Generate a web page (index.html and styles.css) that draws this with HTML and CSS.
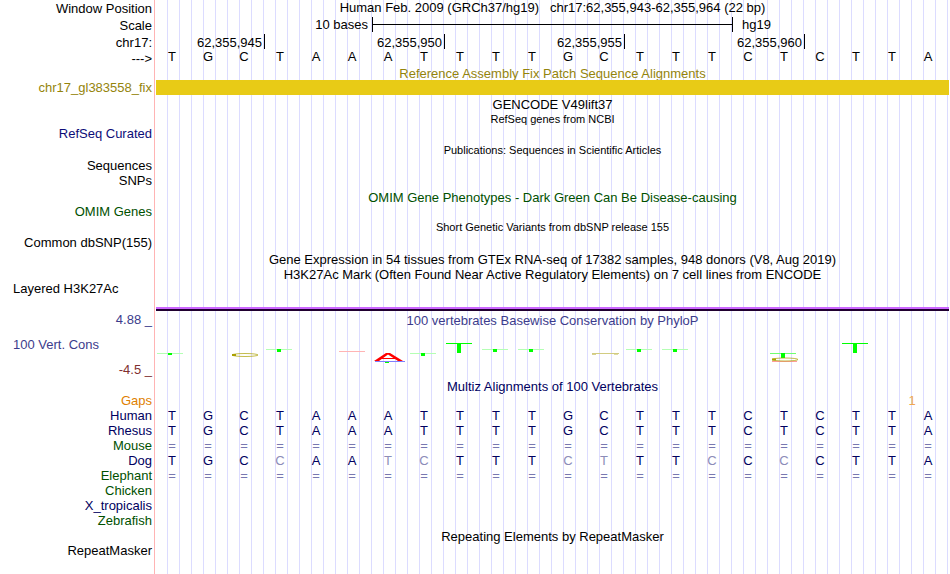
FILE: index.html
```html
<!DOCTYPE html>
<html lang="en">
<head>
    <meta charset="UTF-8">
    <meta name="viewport" content="width=device-width, initial-scale=1.0">
    <title>Human chr17:62,355,943-62,355,964</title>
    <link rel="stylesheet" href="styles.css">
</head>
<body>
    <div class="browser">
        <div class="row head h16"><div class="label">Window Position</div><div class="track title">Human Feb. 2009 (GRCh37/hg19) &nbsp; chr17:62,355,943-62,355,964 (22 bp)</div></div>
        <div class="row head h18">
            <div class="label">Scale</div>
            <div class="track scale">
                <span class="scale-text">10 bases</span>
                <span class="scale-bar"></span>
                <span class="assembly">hg19</span>
            </div>
        </div>
        <div class="row head h16">
            <div class="label">chr17:</div>
            <div class="track ruler">
                <span class="tick first">62,355,945</span>
                <span class="tick">62,355,950</span>
                <span class="tick">62,355,955</span>
                <span class="tick">62,355,960</span>
            </div>
        </div>
        <div class="row head h16"><div class="label">---&gt;</div><div class="track bases ref" data-seq="TGCTAAATTTTGCTTTCTCTTA"></div></div>
        <div class="row h14"><div class="label"></div><div class="track title gold">Reference Assembly Fix Patch Sequence Alignments</div></div>
        <div class="row h16"><div class="label gold">chr17_gl383558_fix</div><div class="track"><div class="patch"></div></div></div>

        <div class="row h16"><div class="label"></div><div class="track title">GENCODE V49lift37</div></div>
        <div class="row h14"><div class="label"></div><div class="track title small">RefSeq genes from NCBI</div></div>
        <div class="row h16"><div class="label blue">RefSeq Curated</div><div class="track"></div></div>
        <div class="row h16"><div class="label"></div><div class="track title small">Publications: Sequences in Scientific Articles</div></div>
        <div class="row"><div class="label">Sequences</div><div class="track"></div></div>
        <div class="row h16"><div class="label">SNPs</div><div class="track"></div></div>
        <div class="row h16"><div class="label"></div><div class="track title green">OMIM Gene Phenotypes - Dark Green Can Be Disease-causing</div></div>
        <div class="row h14"><div class="label green">OMIM Genes</div><div class="track"></div></div>
        <div class="row h16"><div class="label"></div><div class="track title small">Short Genetic Variants from dbSNP release 155</div></div>
        <div class="row h16"><div class="label">Common dbSNP(155)</div><div class="track"></div></div>
        <div class="row h16"><div class="label"></div><div class="track title">Gene Expression in 54 tissues from GTEx RNA-seq of 17382 samples, 948 donors (V8, Aug 2019)</div></div>
        <div class="row h14"><div class="label"></div><div class="track title">H3K27Ac Mark (Often Found Near Active Regulatory Elements) on 7 cell lines from ENCODE</div></div>
        <div class="row signal"><div class="label left">Layered H3K27Ac</div><div class="track"><div class="h3k27ac"></div></div></div>

        <div class="row phylop">
            <div class="label">
                <span class="violet">4.88 _</span>
                <span class="violet name">100 Vert. Cons</span>
                <span class="brown">-4.5 _</span>
            </div>
            <div class="track">
                <div class="title violet">100 vertebrates Basewise Conservation by PhyloP</div>
                <svg class="logo" width="792" height="36" viewBox="0 0 792 36" shape-rendering="crispEdges">
                    <defs>
                        <g id="t-low"><rect width="26" height="1" fill="#b4ffb4"/><rect x="11" width="4" height="3" fill="#00ff00"/></g>
                        <g id="t-high"><rect width="26" height="1" fill="#00ff00"/><rect x="11" width="4" height="10" fill="#00ff00"/></g>
                    </defs>
                    <rect x="1" y="24" width="26" height="1" fill="#b4ffb4"/>
                    <rect x="12" y="24" width="4" height="2" fill="#00ff00"/>
                    <g shape-rendering="auto" fill="none" stroke="#aaa000">
                        <ellipse cx="89" cy="26" rx="13" ry="1.5" stroke-opacity=".7"/>
                        <path d="M76 26h4" stroke-width="2"/>
                    </g>
                    <use href="#t-low" x="110" y="20"/>
                    <rect x="183" y="22" width="26" height="1" fill="#ffb4b4"/>
                    <rect x="219" y="32" width="30" height="1" fill="#8080ff"/>
                    <path d="M218 32L230 24H234L247 32H242L232 25.5L223 32ZM225 29H240V30H225Z" fill="#ff0000" shape-rendering="auto"/>
                    <rect x="229" y="33" width="4" height="1" fill="#00ff00"/>
                    <use href="#t-low" x="254" y="24"/>
                    <use href="#t-high" x="290" y="14"/>
                    <use href="#t-low" x="326" y="20"/>
                    <use href="#t-low" x="362" y="20"/>
                    <rect x="436" y="24" width="27" height="1" fill="#d2cc80"/>
                    <rect x="436" y="25" width="4" height="1" fill="#d8d290"/>
                    <rect x="458" y="25" width="4" height="1" fill="#e0dca8"/>
                    <use href="#t-low" x="470" y="20"/>
                    <use href="#t-low" x="506" y="20"/>
                    <rect x="614" y="24" width="26" height="1" fill="#70ff70"/>
                    <rect x="625" y="24" width="4" height="5" fill="#00ff00"/>
                    <rect x="616" y="32" width="25" height="1" fill="#ff9c9c"/>
                    <g shape-rendering="auto" fill="none" stroke="#aaa000">
                        <ellipse cx="629" cy="30.5" rx="13" ry="1.5" stroke-opacity=".7"/>
                        <path d="M616 30.5h4" stroke-width="2"/>
                    </g>
                    <use href="#t-high" x="686" y="14"/>
                </svg>
            </div>
        </div>

        <div class="row"><div class="label"></div><div class="track title navy">Multiz Alignments of 100 Vertebrates</div></div>
        <div class="row"><div class="label orange">Gaps</div><div class="track bases"><span class="gap">1</span></div></div>
        <div class="row"><div class="label navy">Human</div><div class="track bases navy" data-seq="TGCTAAATTTTGCTTTCTCTTA"></div></div>
        <div class="row"><div class="label navy">Rhesus</div><div class="track bases navy" data-seq="TGCTAAATTTTGCTTTCTCTTA"></div></div>
        <div class="row"><div class="label green">Mouse</div><div class="track bases navy" data-seq="======================"></div></div>
        <div class="row"><div class="label navy">Dog</div><div class="track bases navy" data-seq="TGCcAAtcTTTctTTcCcCTTA"></div></div>
        <div class="row"><div class="label green">Elephant</div><div class="track bases navy" data-seq="======================"></div></div>
        <div class="row"><div class="label green">Chicken</div><div class="track"></div></div>
        <div class="row"><div class="label navy">X_tropicalis</div><div class="track"></div></div>
        <div class="row"><div class="label green">Zebrafish</div><div class="track"></div></div>
        <div class="row"><div class="label"></div><div class="track title">Repeating Elements by RepeatMasker</div></div>
        <div class="row last"><div class="label">RepeatMasker</div><div class="track"></div></div>
    </div>

    <script>
        // one cell per base, lower case = differs from the reference
        document.querySelectorAll('[data-seq]').forEach(function (track) {
            for (const base of track.dataset.seq) {
                const cell = document.createElement('span');
                cell.textContent = base.toUpperCase();
                if (base === '=') {
                    cell.className = 'unaligned';
                } else if (base !== base.toUpperCase()) {
                    cell.className = 'mismatch';
                }
                track.appendChild(cell);
            }
        });
    </script>
</body>
</html>
```
FILE: styles.css
```css
:root {
    --base: 36px;
}

body {
    margin: 0;
    background-color: #fff;
    color: #000;
    font-family: "Liberation Sans", Arial, Helvetica, sans-serif;
    font-size: 13px;
    line-height: 15px;
}

.browser {
    display: flex;
    flex-direction: column;
    min-height: 100vh;
}

.row {
    display: flex;
    height: 15px;
}

.h14 {
    height: 14px;
    line-height: 14px;
}

.h16 {
    height: 16px;
    line-height: 16px;
}

.h18 {
    height: 18px;
    line-height: 18px;
}

.last {
    flex: 1;
}

.label {
    box-sizing: border-box;
    flex: none;
    width: 155px;
    padding-right: 2px;
    border-right: 1px solid #ffb4b4;
    text-align: right;
    white-space: nowrap;
}

.label.left {
    padding-left: 13px;
    text-align: left;
}

.head .label {
    line-height: 18px;
}

.head.h18 .label {
    line-height: 20px;
}

.track {
    flex: 1;
    min-width: 0;
    margin: 0 1px;
    background-image: repeating-linear-gradient(to right, transparent 0, transparent 11px, #dcdcff 11px, #dcdcff 12px);
}

.title {
    line-height: 18px;
    text-align: center;
    white-space: nowrap;
}

.h14 .title,
.head .title {
    line-height: 16px;
}

.small {
    font-size: 11px;
}

.h14 .small {
    line-height: 14px;
}

.h16 .small {
    line-height: 16px;
}

/* scale and ruler */
.scale,
.ruler,
.bases {
    display: grid;
    grid-template-columns: repeat(22, var(--base));
}

.scale-text {
    grid-column: span 6;
    padding-right: 4px;
    text-align: right;
}

.scale-bar {
    grid-column: span 10;
    height: 15px;
    margin: 1px -1px 0 0;
    border: solid #000;
    border-width: 0 1px;
    background: linear-gradient(#000, #000) 0 7px / 100% 1px no-repeat;
}

.assembly {
    grid-column: span 3;
    padding-left: 10px;
}

.tick {
    grid-column: span 5;
    height: 15px;
    margin-right: -1px;
    padding-right: 2px;
    border-right: 1px solid #000;
    line-height: 18px;
    text-align: right;
}

.tick.first {
    grid-column: span 3;
}

/* bases */
.bases span {
    padding-right: 4px;
    text-align: center;
}

.bases.ref {
    line-height: 14px;
}

.bases .mismatch {
    color: #8c8cb8;
}

.bases .unaligned {
    color: #7878b0;
}

.bases .gap {
    grid-column: 21 / span 2;
    padding: 0;
    color: #f0a850;
}

/* signal tracks */
.patch {
    height: 15px;
    background-color: #e8cb16;
}

.signal {
    height: 30px;
}

.signal .track {
    display: flex;
    flex-direction: column;
    justify-content: flex-end;
}

.h3k27ac {
    height: 2px;
    border-top: 2px solid #cc66ff;
    background-color: #200030;
}

.phylop {
    height: 67px;
}

.phylop .label {
    display: flex;
    flex-direction: column;
    justify-content: space-between;
    padding-top: 1px;
    padding-bottom: 1px;
}

.phylop .name {
    padding-left: 13px;
    text-align: left;
}

.phylop .title {
    height: 18px;
    line-height: 20px;
}

.logo {
    display: block;
}

.gold {
    color: #94840c;
}

.blue {
    color: #0c0c78;
}

.green {
    color: #005000;
}

.navy {
    color: #000060;
}

.violet {
    color: #3c3c8c;
}

.brown {
    color: #803030;
}

.orange {
    color: #e08000;
}
```
